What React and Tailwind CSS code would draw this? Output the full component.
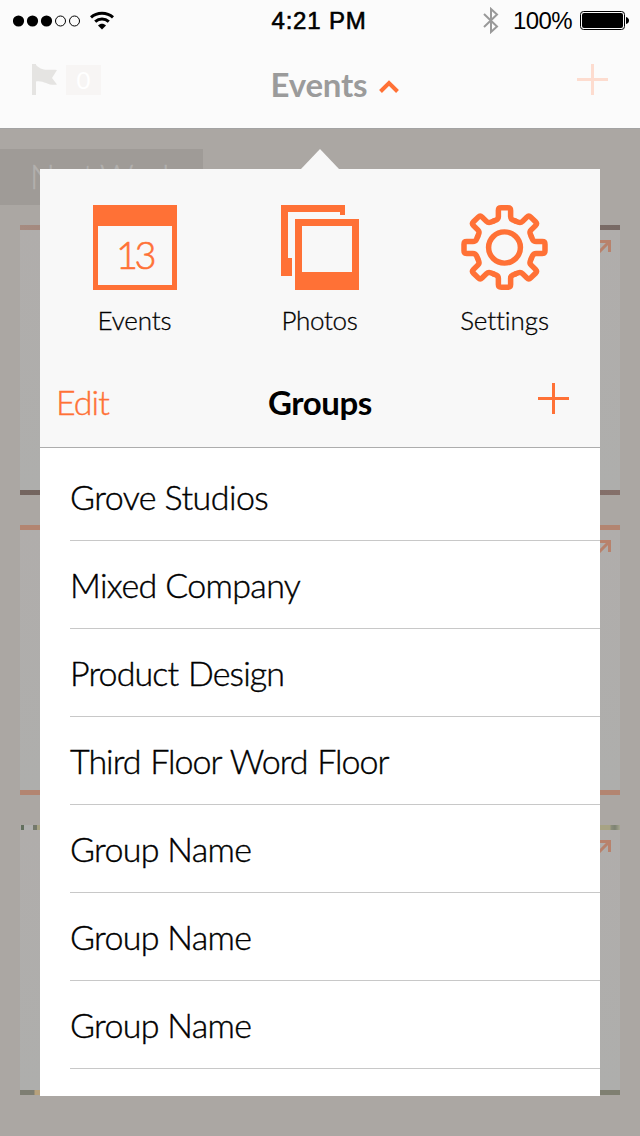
import React from "react";

const groups = [
  { name: "Grove Studios", tracking: "tracking-[-0.55px]" },
  { name: "Mixed Company", tracking: "tracking-[-0.65px]" },
  { name: "Product Design", tracking: "tracking-[-0.88px] [word-spacing:1.4px]" },
  { name: "Third Floor Word Floor", tracking: "tracking-[-1px] [word-spacing:1.5px]" },
  { name: "Group Name", tracking: "tracking-[-0.68px]" },
  { name: "Group Name", tracking: "tracking-[-0.68px]" },
  { name: "Group Name", tracking: "tracking-[-0.68px]" },
];

function StatusBar() {
  return (
    <div className="grid h-[41px] grid-cols-3 items-center pl-[12px] pr-[11px] font-['Liberation_Sans',sans-serif] text-black">
      <div className="flex items-center gap-[9px] pl-px">
        <svg width="68" height="12" viewBox="0 0 68 12">
          {[6, 20, 34].map((x) => (
            <circle key={x} cx={x - 0.5} cy="6" r="5.6" />
          ))}
          {[48, 62].map((x) => (
            <circle key={x} cx={x - 0.5} cy="6" r="5" fill="none" stroke="#000" />
          ))}
        </svg>
        <svg width="24" height="19" viewBox="0 0 24 19" fill="none" stroke="#000" strokeWidth="3">
          <path d="M1 6.3C7 .8 17 .8 23 6.3" />
          <path d="M5.2 10.7c4-3.6 9.600-3.600 13.600 0" />
          <path d="M12 18.500 8 14.500c2.400-2.200 5.600-2.200 8 0z" fill="#000" stroke="none" />
        </svg>
      </div>
      <div className="pr-[3px] text-center text-[24px] leading-none tracking-[0.8px] whitespace-nowrap [-webkit-text-stroke:0.6px_black]">4:21 PM</div>
      <div className="flex items-center justify-end">
        <svg className="mr-[14px]" width="16" height="27" viewBox="0 0 16 27" fill="none" stroke="#999" strokeWidth="2">
          <path d="M1 7l13 12.500-6 5.500V2l6 5.500L1 20" />
        </svg>
        <span className="mr-2 text-[24px] leading-none tracking-[-0.6px]">100%</span>
        <svg width="49" height="19" viewBox="0 0 49 19">
          <rect x=".5" y=".5" width="44" height="18" rx="3" fill="none" stroke="#000" />
          <rect x="2" y="2" width="41" height="15" rx="2" />
          <path d="M46 6q3 1 3 3.500T46 13z" />
        </svg>
      </div>
    </div>
  );
}

function Plus({ className }) {
  return (
    <svg className={className} width="31" height="31" viewBox="0 0 31 31" fill="currentColor">
      <path d="M14 0h3v14h14v3H17v14h-3V17H0v-3h14z" />
    </svg>
  );
}

function NavBar() {
  return (
    <div className="flex h-[87px] justify-between pt-[23px] pr-8 pl-8">
      <div className="flex w-[160px] gap-[8px]">
        <svg width="26" height="31" viewBox="0 0 26 31" fill="#e5e4e2">
          <path d="M0 0h4v1c7 7 13 4 21 5l-5 8 5 6.500c-8 2-14-5-21-3V31H0z" />
        </svg>
        <div className="mt-px flex h-[30px] w-[35px] items-center justify-center bg-[#f7f5f4] pb-px font-['Lato',sans-serif] text-[24px] leading-none text-white">0</div>
      </div>
      <div className="flex gap-[12px] pl-[30px] font-['Lato',sans-serif] text-[#9b9b9b]">
        <h1 className="text-[33px] leading-[40px] font-bold tracking-[-0.2px]">Events</h1>
        <svg className="mt-[16px]" width="20" height="13" viewBox="0 0 20 13" fill="none" stroke="#ff7136" strokeWidth="4">
          <path d="M1.500 11.500 10 3l8.500 8.500" />
        </svg>
      </div>
      <div className="flex w-[160px] justify-end">
        <Plus className="text-[#fddccf]" />
      </div>
    </div>
  );
}

function Card({ top, bottom }) {
  return (
    <div className="flex h-[270px] flex-col bg-linear-to-b from-[#b0adab] to-[#aeaeac]">
      <div className={"h-[5px] shrink-0 " + top} />
      <div className="flex grow justify-end pt-[10px] pr-[9px]">
        <svg width="18" height="18" viewBox="0 0 18 18" fill="none" stroke="#b8826c" strokeWidth="3">
          <path d="M3 1.500h13.500V12M16 2 2 16" />
        </svg>
      </div>
      <div className={"h-[5px] shrink-0 " + bottom} />
    </div>
  );
}

function EventsBackdrop() {
  return (
    <div className="h-[1008px] border-t border-[#a3a3a3] bg-[#aba7a3] pt-5">
      <div className="h-14 w-[203px] bg-[#9f9b97] pl-[30px] font-['Lato',sans-serif] text-[33px] leading-[54px] font-light tracking-[-1.3px] text-[#b2b0ae] [-webkit-text-stroke:0.4px_#b2b0ae]">Next Week</div>
      <div className="flex flex-col gap-[30px] px-5 pt-5">
        <Card top="bg-linear-to-r from-[#a68b80] via-[#8d7970] to-[#786a65]" bottom="bg-linear-to-r from-[#74655f] via-[#706965] to-[#85706a]" />
        <Card top="bg-[#b38571]" bottom="bg-[#b38571]" />
        <Card
          top="bg-[linear-gradient(90deg,#ababa9_1px,#63705e_1px,#63705e_4px,#b0b0af_4px,#b0b0af_13px,#74796b_13px,#74796b_17px,#a7a384_17px,#a7a384_590px,#8c8f7c_591px,#7d8272_595px,#a7a791_600px)]"
          bottom="bg-[linear-gradient(90deg,#7e7e72_14px,#b7a17c_15px,#b7a17c_20px,#7f7f71_21px)]"
        />
      </div>
    </div>
  );
}

function CalendarIcon() {
  return (
    <div className="flex h-[85px] w-[84px] items-center justify-center border-5 border-t-[21px] border-[#ff7136] pr-px pb-[3px] font-['Lato',sans-serif] text-[38px] leading-none font-light tracking-[-3.5px] text-[#ff7136] [-webkit-text-stroke:0.6px_#ff7136]">
      13
    </div>
  );
}

function PhotosIcon() {
  return (
    <svg width="78" height="85" viewBox="0 0 78 85" fill="#ff7136">
      <path d="M0 0h64v10h-5V7H7v46h4v18H0z" />
      <path fillRule="evenodd" d="M14 14h64v71H14zM21 21v46h50V21z" />
    </svg>
  );
}

function SettingsIcon() {
  return (
    <svg className="mr-px" width="88" height="86" viewBox="-43.5 -42.5 88 86" fill="none" stroke="#ff7136" strokeWidth="5.400" strokeLinecap="round">
      <g transform="scale(1.020 1)">
        {[0, 45, 90, 135, 180, 225, 270, 315].map((a) => (
          <path
            key={a}
            transform={`rotate(${a})`}
            d="M-10.800-26.400-8.200-27.500Q-6-28.500-6-31V-37Q-6-39.700-3.300-39.700H3.300Q6-39.700 6-37V-31Q6-28.500 8.200-27.500L10.800-26.400"
          />
        ))}
        <circle r="15.600" />
      </g>
    </svg>
  );
}

function Shortcut({ icon, label, tracking }) {
  return (
    <div className="flex w-[185px] flex-col items-center">
      <div className="flex h-[86px] items-start">{icon}</div>
      <span className={"mt-[13px] pr-px text-[26px] leading-[32px] " + tracking}>{label}</span>
    </div>
  );
}

function GroupsPopover() {
  return (
    <div className="absolute top-[149px] left-10 flex h-[947px] w-[560px] flex-col font-['Lato',sans-serif] font-light text-black [font-variant-ligatures:none]">
      <svg className="self-center" width="38" height="20" viewBox="0 0 38 20" fill="#f8f8f8">
        <path d="M0 20 19 0l19 20z" />
      </svg>
      <div className="flex h-[279px] shrink-0 flex-col border-b border-[#adadad] bg-[#f8f8f8]">
        <div className="flex justify-center pt-9 [-webkit-text-stroke:0.3px_black]">
          <Shortcut icon={<CalendarIcon />} label="Events" tracking="tracking-[-0.1px]" />
          <Shortcut icon={<PhotosIcon />} label="Photos" tracking="tracking-[-0.3px]" />
          <Shortcut icon={<SettingsIcon />} label="Settings" tracking="tracking-[-0.1px]" />
        </div>
        <div className="mt-[47px] grid grid-cols-3 pr-[31px] pl-4">
          <span className="-mt-px text-[34px] leading-[40px] tracking-[-1px] text-[#ff7136] [-webkit-text-stroke:0.4px_#ff7136]">Edit</span>
          <h2 className="-mt-px ml-[15px] text-center text-[33px] leading-[40px] font-bold tracking-[-0.4px]">Groups</h2>
          <Plus className="justify-self-end text-[#ff7136]" />
        </div>
      </div>
      <ul className="flex grow flex-col bg-white pt-[5px] pl-[30px] [-webkit-text-stroke:0.4px_black]">
        {groups.map((g, i) => (
          <li key={i} className={"h-[88px] border-b border-[#c8c8c8] pt-[24px] text-[34px] leading-[40px] " + g.tracking}>
            {g.name}
          </li>
        ))}
      </ul>
    </div>
  );
}

export default function App() {
  return (
    <div className="relative h-[1136px] w-[640px] overflow-hidden">
      <header className="h-32 bg-[#fbfbfb]">
        <StatusBar />
        <NavBar />
      </header>
      <EventsBackdrop />
      <GroupsPopover />
    </div>
  );
}
